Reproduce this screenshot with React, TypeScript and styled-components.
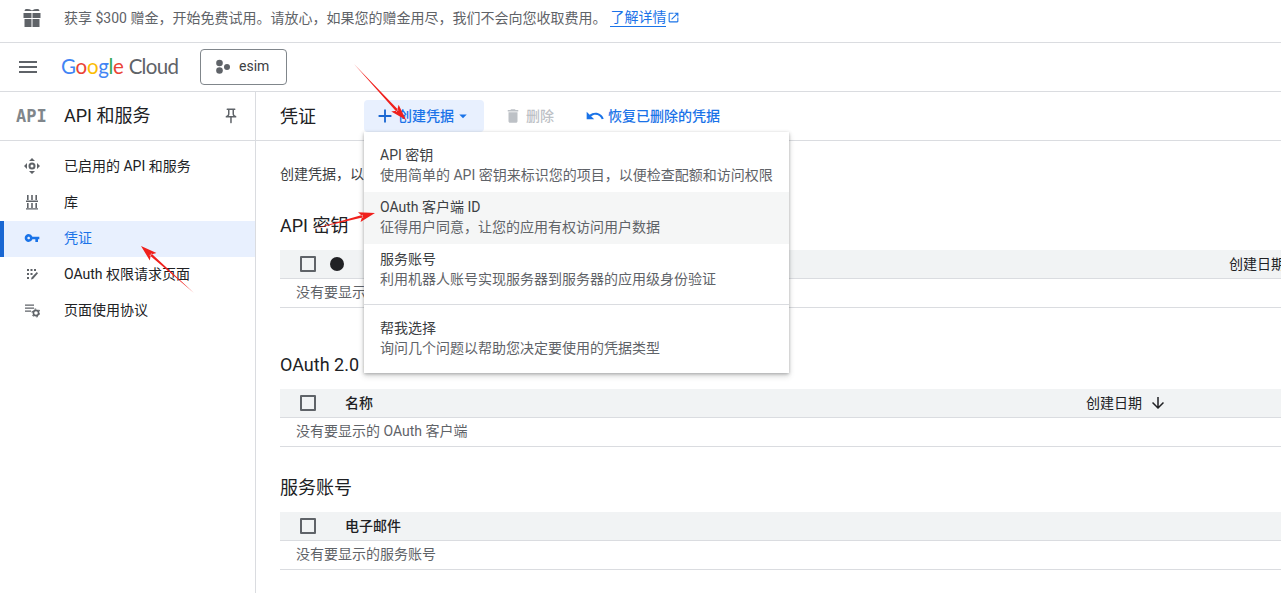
import styled, { createGlobalStyle } from "styled-components";
import {
  MdAdd,
  MdArrowDropDown,
  MdArrowDownward,
  MdDelete,
  MdMenu,
  MdOpenInNew,
  MdOutlinePushPin,
  MdUndo,
  MdVpnKey,
} from "react-icons/md";

const GlobalStyle = createGlobalStyle`
  html, body {
    margin: 0;
    padding: 0;
    background: #fff;
    overflow: hidden;
  }
  body {
    font-family: Roboto, "Noto Sans CJK SC", sans-serif;
    color: #202124;
  }
`;

const Page = styled.div`
  position: relative;
  width: 1281px;
  height: 593px;
  overflow: hidden;
`;

const Banner = styled.div`
  height: 34px;
  display: flex;
  align-items: center;
  padding: 0 0 8px 22px;
  border-bottom: 1px solid #dadce0;
  font-size: 14px;
  color: #5f6368;
`;

const GiftIcon = styled.svg`
  width: 20px;
  height: 20px;
  fill: #5f6368;
  margin-right: 22px;
`;

const LearnMore = styled.a`
  margin-left: 4px;
  color: #1a73e8;
  border-bottom: 1px solid #1a73e8;
  line-height: 18px;
`;

const ExternalIcon = styled(MdOpenInNew)`
  font-size: 13px;
  color: #1a73e8;
  margin-left: 1px;
`;

const Header = styled.header`
  height: 48px;
  display: flex;
  align-items: center;
  padding-left: 16px;
  border-bottom: 1px solid #dadce0;
`;

const MenuIcon = styled(MdMenu)`
  font-size: 24px;
  color: #5f6368;
  margin-right: 21px;
`;

const Logo = styled.div`
  width: 139px;
  padding-bottom: 3px;
  font-family: Lato, sans-serif;
  font-size: 20.5px;
  letter-spacing: -0.3px;
  white-space: nowrap;
`;

const LogoLetter = styled.span<{ $color: string }>`
  color: ${(p) => p.$color};
`;

const LogoCloud = styled.span`
  color: #5f6368;
  margin-left: 5px;
  letter-spacing: -0.7px;
`;

const ProjectButton = styled.div`
  width: 71px;
  height: 34px;
  display: flex;
  align-items: center;
  gap: 8px;
  padding-left: 14px;
  border: 1px solid #80868b;
  border-radius: 4px;
  font-size: 14px;
  color: #3c4043;
`;

const ProjectName = styled.span`
  padding-bottom: 3px;
`;

const Body = styled.div`
  display: flex;
  height: 501px;
`;

const Sidebar = styled.aside`
  width: 255px;
  flex-shrink: 0;
  border-right: 1px solid #dadce0;
`;

const SidebarHead = styled.div`
  height: 48px;
  display: flex;
  align-items: center;
  padding-left: 16px;
  border-bottom: 1px solid #dadce0;
`;

const ApiBadge = styled.span`
  width: 48px;
  font-family: "DejaVu Sans Mono", monospace;
  font-weight: 700;
  font-size: 17px;
  color: #80868b;
`;

const SidebarTitle = styled.div`
  flex: 1;
  padding-bottom: 4px;
  font-size: 18px;
  color: #202124;
`;

const PinIcon = styled(MdOutlinePushPin)`
  font-size: 18px;
  color: #5f6368;
  margin-right: 15px;
`;

const Nav = styled.nav`
  padding-top: 8px;
`;

const NavItem = styled.div<{ $active?: boolean }>`
  height: 36px;
  display: flex;
  align-items: center;
  padding-left: ${(p) => (p.$active ? "20px" : "24px")};
  gap: 24px;
  font-size: 14px;
  color: ${(p) => (p.$active ? "#1a73e8" : "#202124")};
  background: ${(p) => (p.$active ? "#e8f0fe" : "transparent")};
  border-left: ${(p) => (p.$active ? "4px solid #1967d2" : "none")};
`;

const NavLabel = styled.span`
  padding-bottom: 4px;
`;

const NavIconSlot = styled.svg`
  width: 16px;
  height: 16px;
  flex-shrink: 0;
  fill: #5f6368;
  margin-bottom: 2px;
`;

const KeyIcon = styled(MdVpnKey)`
  width: 16px;
  height: 16px;
  flex-shrink: 0;
  margin-bottom: 2px;
  color: #1a73e8;
`;

const Main = styled.main`
  flex: 1;
  min-width: 0;
`;

const Toolbar = styled.div`
  height: 48px;
  display: flex;
  align-items: center;
  padding-left: 24px;
  border-bottom: 1px solid #dadce0;
`;

const PageTitle = styled.h1`
  width: 84px;
  margin: 0;
  padding-bottom: 3px;
  font-size: 18px;
  font-weight: 400;
  color: #202124;
`;

const ToolButton = styled.div<{ $disabled?: boolean; $open?: boolean }>`
  height: 32px;
  display: flex;
  align-items: center;
  padding: 0 8px 0 ${(p) => (p.$open ? "10px" : "0")};
  border-radius: 4px;
  font-size: 14px;
  font-weight: 500;
  color: ${(p) => (p.$disabled ? "#bdc1c6" : "#1a73e8")};
  background: ${(p) => (p.$open ? "#e8f0fe" : "transparent")};
`;

const CreateButton = styled(ToolButton)`
  width: 120px;
  box-sizing: border-box;
  margin-right: 20px;
`;

const DeleteButton = styled(ToolButton)`
  margin-right: 23px;
`;

const ToolLabel = styled.span<{ $gap: number }>`
  margin-left: ${(p) => p.$gap}px;
  padding-bottom: 2px;
`;

const PlusIcon = styled(MdAdd)`
  font-size: 22px;
  color: #1967d2;
`;

const Content = styled.div`
  padding: 23px 0 0 24px;
`;

const Intro = styled.p`
  margin: 0;
  height: 20px;
  line-height: 20px;
  font-size: 14px;
  color: #3c4043;
`;

const SectionTitle = styled.h2<{ $top: number }>`
  margin: ${(p) => p.$top}px 0 0;
  height: 24px;
  line-height: 24px;
  font-size: 18px;
  font-weight: 400;
  color: #202124;
`;

const Table = styled.div`
  margin-top: 12px;
`;

const TableHead = styled.div`
  height: 28px;
  display: flex;
  align-items: center;
  padding-left: 20px;
  background: #f1f3f4;
  border-bottom: 1px solid #dadce0;
  font-size: 14px;
  font-weight: 500;
  color: #202124;
`;

const HeadLabel = styled.span`
  padding-bottom: 2px;
`;

const Checkbox = styled.span`
  width: 12px;
  height: 12px;
  border: 2px solid #5f6368;
  border-radius: 1px;
  margin-right: 29px;
  flex-shrink: 0;
`;

const Dot = styled.span`
  width: 14px;
  height: 14px;
  margin-left: -15px;
  border-radius: 50%;
  background: #202124;
`;

const HeadSpacer = styled.span`
  flex: 1;
`;

const DateCell = styled.span<{ $right: number }>`
  display: flex;
  align-items: center;
  gap: 7px;
  padding-bottom: 2px;
  font-weight: 400;
  white-space: nowrap;
  margin-right: ${(p) => p.$right}px;
`;

const SortIcon = styled(MdArrowDownward)`
  font-size: 18px;
  margin-top: 2px;
`;

const EmptyRow = styled.div`
  height: 24px;
  display: flex;
  align-items: center;
  padding: 0 0 4px 16px;
  border-bottom: 1px solid #dadce0;
  font-size: 14px;
  color: #5f6368;
`;

const Menu = styled.div`
  position: absolute;
  left: 364px;
  top: 132px;
  width: 425px;
  height: 241px;
  padding-top: 8px;
  box-sizing: border-box;
  background: #fff;
  box-shadow: 0 1px 3px rgba(60, 64, 67, 0.35), 0 3px 6px rgba(60, 64, 67, 0.2);
  z-index: 2;
`;

const MenuItem = styled.div<{ $hover?: boolean }>`
  height: 52px;
  padding: 5px 16px 0;
  box-sizing: border-box;
  background: ${(p) => (p.$hover ? "#f5f6f6" : "transparent")};
`;

const MenuTitle = styled.div`
  font-size: 14px;
  line-height: 20px;
  color: #3c4043;
`;

const MenuDesc = styled.div`
  font-size: 14px;
  line-height: 20px;
  color: #5f6368;
`;

const MenuDivider = styled.div`
  height: 1px;
  margin: 8px 0 8px;
  background: #dadce0;
`;

const Annotations = styled.svg`
  position: absolute;
  left: 0;
  top: 0;
  width: 1281px;
  height: 593px;
  pointer-events: none;
  z-index: 3;
`;

function Arrow({ x1, y1, x2, y2 }: { x1: number; y1: number; x2: number; y2: number }) {
  const angle = Math.atan2(y2 - y1, x2 - x1);
  const len = 17;
  const spread = 0.3;
  const ax = x2 - len * Math.cos(angle - spread);
  const ay = y2 - len * Math.sin(angle - spread);
  const bx = x2 - len * Math.cos(angle + spread);
  const by = y2 - len * Math.sin(angle + spread);
  const mx = x2 - len * 0.72 * Math.cos(angle);
  const my = y2 - len * 0.72 * Math.sin(angle);
  const nx = Math.sin(angle);
  const ny = -Math.cos(angle);
  const w = 1.3;
  return (
    <polygon
      fill="#f0201c"
      points={`${x1},${y1} ${mx + nx * w},${my + ny * w} ${ax},${ay} ${x2},${y2} ${bx},${by} ${mx - nx * w},${my - ny * w}`}
    />
  );
}

const logoLetters: [string, string][] = [
  ["G", "#4285f4"],
  ["o", "#ea4335"],
  ["o", "#fbbc04"],
  ["g", "#4285f4"],
  ["l", "#34a853"],
  ["e", "#ea4335"],
];

export default function App() {
  return (
    <Page>
      <GlobalStyle />
      <Banner>
        <GiftIcon viewBox="0 0 20 20">
          <path d="M3 2.500c2-.8 4.500-.5 7 1 2.500-1.500 5-1.800 7-1l.5 1.500h-15z" />
          <path d="M1.500 6h8v5h-8zM10.500 6h8v5h-8zM2.500 12h7v8h-7zM10.500 12h7v8h-7z" />
        </GiftIcon>
        获享 $300 赠金，开始免费试用。请放心，如果您的赠金用尽，我们不会向您收取费用。
        <LearnMore>了解详情</LearnMore>
        <ExternalIcon />
      </Banner>
      <Header>
        <MenuIcon />
        <Logo>
          {logoLetters.map(([letter, color], i) => (
            <LogoLetter key={i} $color={color}>
              {letter}
            </LogoLetter>
          ))}
          <LogoCloud>Cloud</LogoCloud>
        </Logo>
        <ProjectButton>
          <svg width="16" height="16" viewBox="0 0 16 16" fill="#5f6368">
            <circle cx="4.500" cy="4" r="3.300" />
            <circle cx="4.500" cy="11.500" r="3.300" />
            <circle cx="12" cy="8" r="3" />
          </svg>
          <ProjectName>esim</ProjectName>
        </ProjectButton>
      </Header>
      <Body>
        <Sidebar>
          <SidebarHead>
            <ApiBadge>API</ApiBadge>
            <SidebarTitle>API 和服务</SidebarTitle>
            <PinIcon />
          </SidebarHead>
          <Nav>
            <NavItem>
              <NavIconSlot viewBox="0 0 16 16">
                <path d="M8 0l3 3H5zM8 16l-3-3h6zM0 8l3-3v6zM16 8l-3 3V5z" />
                <path
                  fillRule="evenodd"
                  d="M8 4.500a3.500 3.500 0 1 1 0 7 3.500 3.500 0 0 1 0-7zm0 2a1.500 1.500 0 1 0 0 3 1.500 1.500 0 0 0 0-3z"
                />
              </NavIconSlot>
              <NavLabel>已启用的 API 和服务</NavLabel>
            </NavItem>
            <NavItem>
              <NavIconSlot viewBox="0 0 16 16">
                <path d="M3 1h1.600v5H3zM7.200 1h1.600v5H7.200zM11.400 1h1.600v5h-1.600zM2 6.500h12v1.400H2zM3 9h1.600v5H3zM7.200 9h1.600v5H7.200zM11.400 9h1.600v5h-1.600zM2 14.200h12v1.400H2z" />
              </NavIconSlot>
              <NavLabel>库</NavLabel>
            </NavItem>
            <NavItem $active>
              <KeyIcon />
              <NavLabel>凭证</NavLabel>
            </NavItem>
            <NavItem>
              <NavIconSlot viewBox="0 0 16 16">
                <path d="M3 3h2v2H3zM6.500 3h2v2h-2zM10 3h2v2h-2zM3 7h2v2H3zM6.500 7h2v2h-2zM3 11h2v2H3zM12.800 6l1.200 1.200-5 5.800-2 .5.500-2z" />
              </NavIconSlot>
              <NavLabel>OAuth 权限请求页面</NavLabel>
            </NavItem>
            <NavItem>
              <NavIconSlot viewBox="0 0 16 16">
                <path d="M1 2.500h9v1.200H1zM1 5.500h9v1.200H1zM1 8.500h6v1.200H1z" />
                <circle cx="12" cy="11" r="2.600" fill="none" stroke="#5f6368" strokeWidth="1.600" />
                <circle cx="12" cy="11" r="4" fill="none" stroke="#5f6368" strokeWidth="1.200" strokeDasharray="1.700 2.500" />
              </NavIconSlot>
              <NavLabel>页面使用协议</NavLabel>
            </NavItem>
          </Nav>
        </Sidebar>
        <Main>
          <Toolbar>
            <PageTitle>凭证</PageTitle>
            <CreateButton $open>
              <PlusIcon />
              <ToolLabel $gap={2}>创建凭据</ToolLabel>
              <MdArrowDropDown size={18} />
            </CreateButton>
            <DeleteButton $disabled>
              <MdDelete size={18} />
              <ToolLabel $gap={4}>删除</ToolLabel>
            </DeleteButton>
            <ToolButton>
              <MdUndo size={20} />
              <ToolLabel $gap={3}>恢复已删除的凭据</ToolLabel>
            </ToolButton>
          </Toolbar>
          <Content>
            <Intro>创建凭据，以访问您已启用的 API。</Intro>
            <SectionTitle $top={30}>API 密钥</SectionTitle>
            <Table>
              <TableHead>
                <Checkbox />
                <Dot />
                <HeadSpacer />
                <DateCell $right={-4}>创建日期</DateCell>
              </TableHead>
              <EmptyRow>没有要显示的 API 密钥</EmptyRow>
            </Table>
            <SectionTitle $top={45}>OAuth 2.0 客户端 ID</SectionTitle>
            <Table>
              <TableHead>
                <Checkbox />
                <HeadLabel>名称</HeadLabel>
                <HeadSpacer />
                <DateCell $right={114}>
                  创建日期
                  <SortIcon />
                </DateCell>
              </TableHead>
              <EmptyRow>没有要显示的 OAuth 客户端</EmptyRow>
            </Table>
            <SectionTitle $top={29}>服务账号</SectionTitle>
            <Table>
              <TableHead>
                <Checkbox />
                <HeadLabel>电子邮件</HeadLabel>
              </TableHead>
              <EmptyRow>没有要显示的服务账号</EmptyRow>
            </Table>
          </Content>
        </Main>
      </Body>
      <Menu>
        <MenuItem>
          <MenuTitle>API 密钥</MenuTitle>
          <MenuDesc>使用简单的 API 密钥来标识您的项目，以便检查配额和访问权限</MenuDesc>
        </MenuItem>
        <MenuItem $hover>
          <MenuTitle>OAuth 客户端 ID</MenuTitle>
          <MenuDesc>征得用户同意，让您的应用有权访问用户数据</MenuDesc>
        </MenuItem>
        <MenuItem>
          <MenuTitle>服务账号</MenuTitle>
          <MenuDesc>利用机器人账号实现服务器到服务器的应用级身份验证</MenuDesc>
        </MenuItem>
        <MenuDivider />
        <MenuItem>
          <MenuTitle>帮我选择</MenuTitle>
          <MenuDesc>询问几个问题以帮助您决定要使用的凭据类型</MenuDesc>
        </MenuItem>
      </Menu>
      <Annotations viewBox="0 0 1281 593">
        <Arrow x1={354} y1={64} x2={406} y2={120} />
        <Arrow x1={313} y1={229} x2={375} y2={213} />
        <Arrow x1={194} y1={293} x2={141} y2={246} />
      </Annotations>
    </Page>
  );
}
